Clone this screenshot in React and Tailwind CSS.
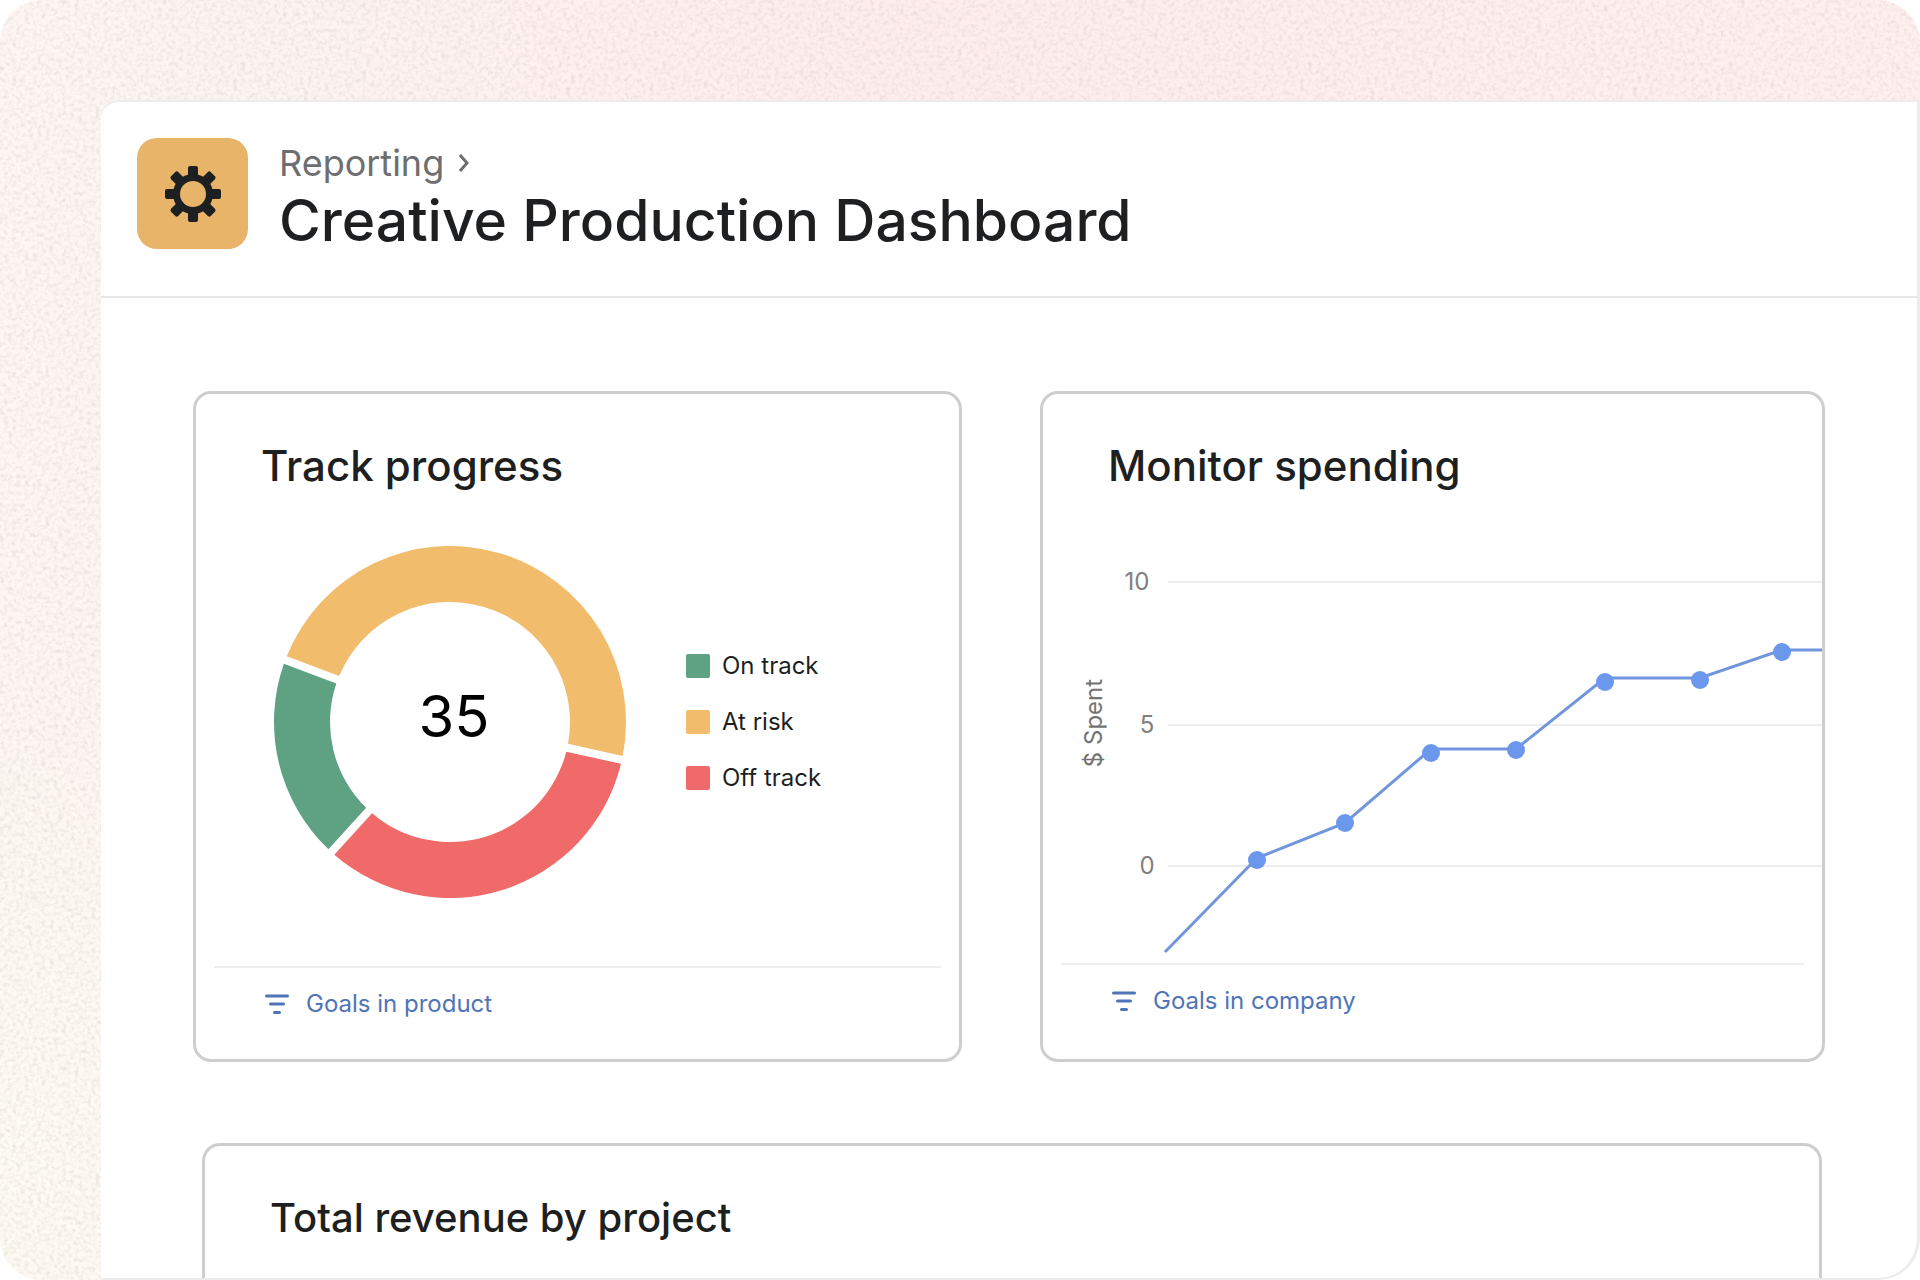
const legend = [
  { label: "On track", swatch: "bg-[#5ea283]" },
  { label: "At risk", swatch: "bg-[#f1bd6c]" },
  { label: "Off track", swatch: "bg-[#f06a6a]" },
];

const segments = [
  { from: 200.6, to: 372.4, color: "#f1bd6c" },
  { from: 12.4, to: 132.4, color: "#f06a6a" },
  { from: 132.4, to: 200.6, color: "#5ea283" },
];

const gridLines = [
  { label: "10", x: 94, y: 88 },
  { label: "5", x: 104, y: 231 },
  { label: "0", x: 104, y: 372 },
];

const points = [
  [214, 366],
  [302, 329],
  [388, 259],
  [473, 256],
  [562, 188],
  [657, 186],
  [739, 158],
];

// Ring segment whose ends run parallel to its neighbours, leaving an even gap.
function segmentPath({ from, to }) {
  const outer = 176;
  const inner = 120;
  const halfGap = 4;
  const at = (radius, degrees, side) => {
    const angle = (degrees * Math.PI) / 180 + side * Math.asin(halfGap / radius);
    return `${radius * Math.cos(angle)} ${radius * Math.sin(angle)}`;
  };
  return `M${at(outer, from, 1)}A${outer} ${outer} 0 0 1 ${at(outer, to, -1)}L${at(inner, to, -1)}A${inner} ${inner} 0 0 0 ${at(inner, from, 1)}Z`;
}

function Grain() {
  return (
    <svg className="absolute inset-0 h-full w-full" aria-hidden="true">
      <filter id="grain" x="0" y="0" width="100%" height="100%">
        <feTurbulence type="fractalNoise" baseFrequency="0.24" numOctaves="3" seed="4" />
        <feColorMatrix
          type="matrix"
          values="0 0 0 0 0.62  0 0 0 0 0.58  0 0 0 0 0.57  0.65 0.65 0 0 -0.58"
        />
      </filter>
      <rect width="100%" height="100%" filter="url(#grain)" />
    </svg>
  );
}

function GearIcon() {
  return (
    <svg className="h-14 w-14" viewBox="-28 -28 56 56" fill="#1e1f21" aria-hidden="true">
      {[0, 45, 90, 135].map((angle) => (
        <rect key={angle} x="-5" y="-28" width="10" height="56" rx="2" transform={`rotate(${angle})`} />
      ))}
      <circle r="20" />
      <circle r="13" fill="#e8b469" />
    </svg>
  );
}

function FilterIcon() {
  return (
    <svg
      className="h-6 w-6"
      viewBox="0 0 24 24"
      fill="none"
      stroke="currentColor"
      strokeWidth="3"
      strokeLinecap="round"
      aria-hidden="true"
    >
      <path d="M1.5 4h21M5.5 12h13M9.5 20.5h5" />
    </svg>
  );
}

function Card({ title, titleSize = "text-[42px]", className = "", children }) {
  return (
    <section className={`flex flex-col rounded-[18px] border-[3px] border-[#cecece] bg-white ${className}`}>
      <h2 className={`px-[65px] pt-11 leading-14 font-medium ${titleSize}`}>{title}</h2>
      {children}
    </section>
  );
}

function CardFooter({ children }) {
  return (
    <div className="mx-[18px] border-t-2 border-[#f0eef0] px-[51px] pt-5 pb-[39px]">
      <a href="#goals" className="flex items-center gap-[17px] text-2xl leading-8 text-[#4f74b8]">
        <FilterIcon />
        {children}
      </a>
    </div>
  );
}

function Donut() {
  return (
    <div className="grid shrink-0 place-items-center">
      <svg className="col-start-1 row-start-1 h-[352px] w-[352px]" viewBox="-176 -176 352 352" aria-hidden="true">
        {segments.map((segment) => (
          <path key={segment.color} d={segmentPath(segment)} fill={segment.color} />
        ))}
      </svg>
      <span className="col-start-1 row-start-1 pb-3 pl-2 text-[58px] leading-none text-black">35</span>
    </div>
  );
}

function SpendingChart() {
  return (
    <svg className="block w-full" viewBox="0 0 779 469" role="img" aria-label="Dollars spent">
      {gridLines.map((line) => (
        <g key={line.label}>
          <line x1="125" x2="779" y1={line.y} y2={line.y} stroke="#eeeeee" strokeWidth="2" />
          <text x={line.x} y={line.y + 8} textAnchor="middle" fontSize="24" fill="#808080">
            {line.label}
          </text>
        </g>
      ))}
      <text transform="translate(59 229) rotate(-90)" textAnchor="middle" fontSize="24" fill="#737373">
        $ Spent
      </text>
      <path
        d="M122 458L214 364L302 329L388 255H473L562 184H657L739 156H779"
        fill="none"
        stroke="#7296dc"
        strokeWidth="3"
      />
      {points.map(([x, y]) => (
        <circle key={x} cx={x} cy={y} r="9" fill="#6b97ec" />
      ))}
    </svg>
  );
}

export default function App() {
  return (
    <div className="min-h-screen bg-white font-['Inter',sans-serif] text-[#1e1f21]">
      <div className="relative flex min-h-screen overflow-hidden rounded-[42px] bg-[radial-gradient(circle_at_0%_90%,#fefbf2_0%,transparent_20%),linear-gradient(90deg,#fdf6f2_0%,#fdf4f1_12%,#ffeded_45%,#fff0ef_100%)] pt-[100px] pl-[101px]">
        <Grain />
        <main className="relative flex flex-1 flex-col rounded-tl-[18px] rounded-br-[42px] border-t-2 border-r-[3px] border-b-2 border-[#ececec] bg-white">
          <header className="flex items-start gap-[31px] border-b-2 border-[#e8e6e7] px-9 pt-9 pb-[37px]">
            <div className="grid h-[111px] w-[111px] place-items-center rounded-[20px] bg-[#e8b469]">
              <GearIcon />
            </div>
            <div className="pt-[5px]">
              <a href="#reporting" className="flex items-center gap-[14px] text-4xl leading-10 text-[#6d6e6f]">
                Reporting
                <svg className="h-5 w-3" viewBox="0 0 12 20" fill="none" stroke="currentColor" strokeWidth="3" aria-hidden="true">
                  <path d="M2 2l7 8l-7 8" />
                </svg>
              </a>
              <h1 className="text-[57px] leading-[76px] font-medium">Creative Production Dashboard</h1>
            </div>
          </header>

          <div className="flex flex-1 flex-col px-[92px] pt-[93px]">
            <div className="grid grid-cols-[769fr_785fr] gap-[78px]">
              <Card title="Track progress">
                <div className="flex items-center gap-[60px] pt-[52px] pb-[68px] pl-[78px]">
                  <Donut />
                  <ul className="flex flex-col gap-6">
                    {legend.map((item) => (
                      <li key={item.label} className="flex items-center gap-3 text-2xl leading-8">
                        <span className={`h-6 w-6 rounded-[2px] ${item.swatch}`} />
                        {item.label}
                      </li>
                    ))}
                  </ul>
                </div>
                <CardFooter>Goals in product</CardFooter>
              </Card>

              <Card title="Monitor spending">
                <SpendingChart />
                <CardFooter>Goals in company</CardFooter>
              </Card>
            </div>

            <Card
              title="Total revenue by project"
              titleSize="text-[40px]"
              className="mt-[81px] mr-[3px] ml-[9px] flex-1 rounded-b-none border-b-0"
            />
          </div>
        </main>
      </div>
    </div>
  );
}
